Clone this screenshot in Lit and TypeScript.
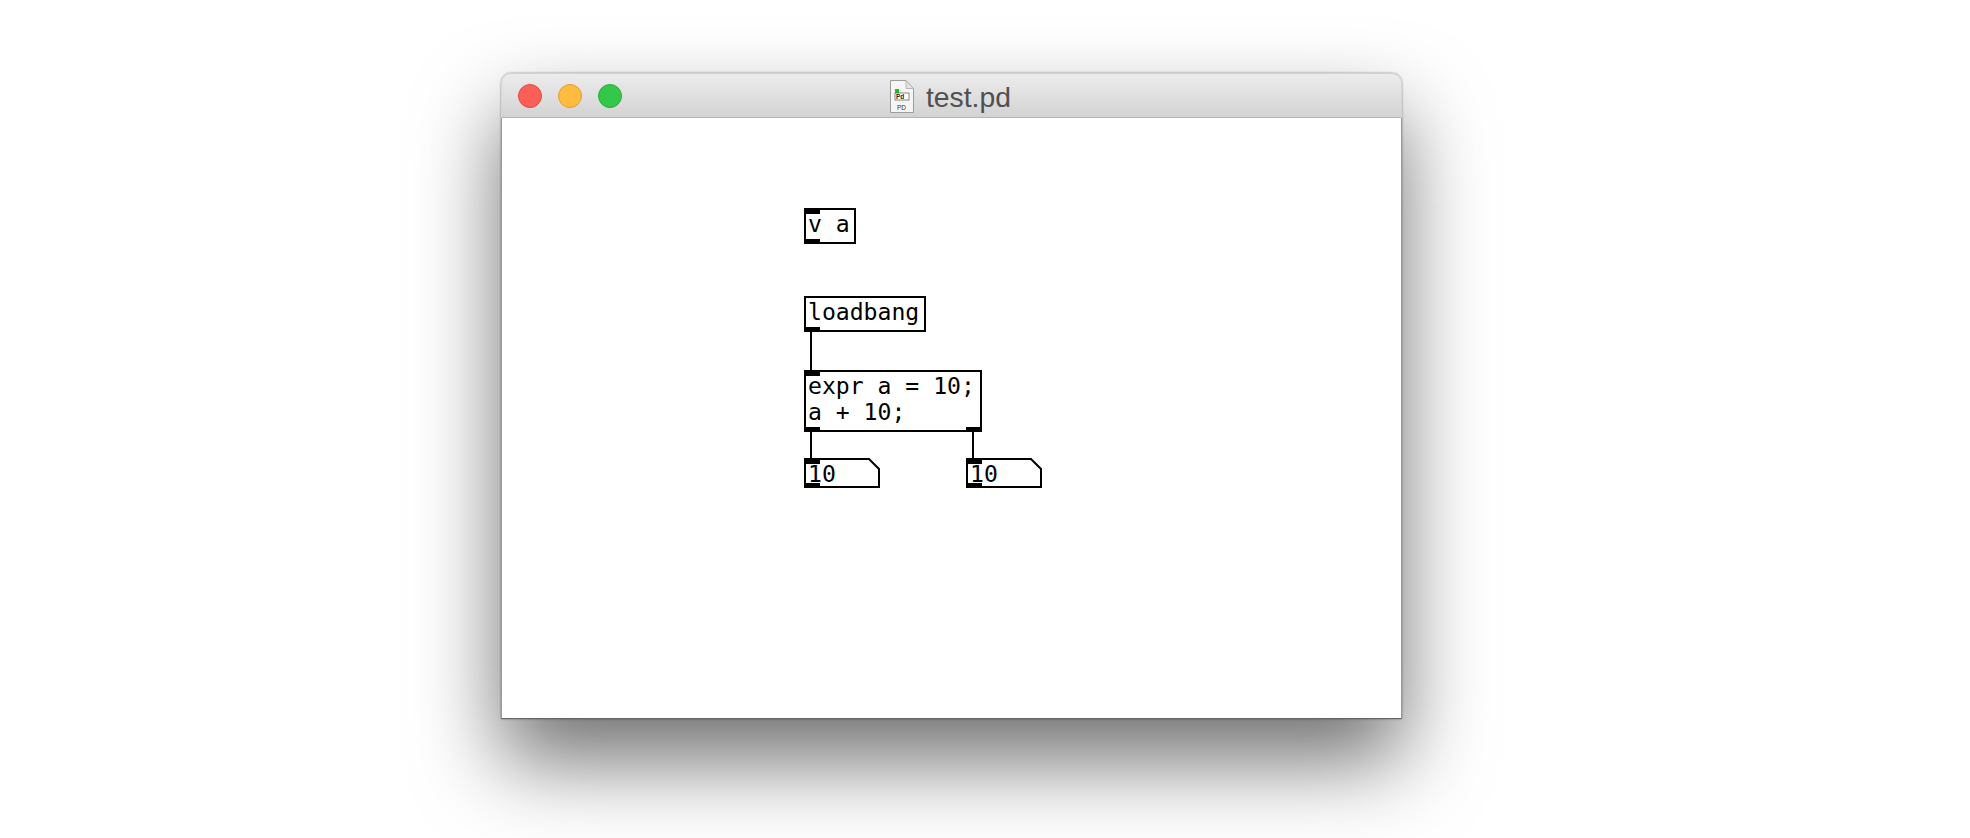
import { LitElement, html, css, svg } from "lit";
import { customElement } from "lit/decorators.js";

type Box = { cls: string; x: number; y: number; w: number; h: number; lines: string[]; outlets: number[]; inlets: number[] };

const boxes: Box[] = [
  { cls: "obj", x: 0, y: 0, w: 52, h: 36, lines: ["v a"], inlets: [0], outlets: [0] },
  { cls: "obj", x: 0, y: 88, w: 122, h: 36, lines: ["loadbang"], inlets: [], outlets: [0] },
  { cls: "obj", x: 0, y: 162, w: 178, h: 62, lines: ["expr a = 10;", "a + 10;"], inlets: [0], outlets: [0, 162] },
  { cls: "num", x: 0, y: 250, w: 76, h: 30, lines: ["10"], inlets: [0], outlets: [0] },
  { cls: "num", x: 162, y: 250, w: 76, h: 30, lines: ["10"], inlets: [0], outlets: [0] },
];

const wires = [
  { x: 6, y: 124, h: 38 },
  { x: 6, y: 224, h: 26 },
  { x: 168, y: 224, h: 26 },
];

@customElement("app-root")
export class AppRoot extends LitElement {
  static styles = css`
    :host { display: block; height: 838px; overflow: hidden; background: #fff; }
    .stage { padding: 73px 0 0 501px; }
    .window {
      width: 901px; height: 646px; display: flex; flex-direction: column; background: #fff;
      border-radius: 10px 10px 0 0;
      box-shadow: 0 42px 84px rgba(0,0,0,.56), 0 0 2px rgba(0,0,0,.5);
    }
    .bar {
      flex: none; display: flex; align-items: center; position: relative;
      background: linear-gradient(#ececec, #d3d3d3);
      border: 1px solid #d6d6d6; border-top-color: #d2d2d2; border-bottom-color: #b5b5b5;
      border-radius: 10px 10px 0 0; height: 43px;
    }
    .lights { display: flex; gap: 16px; padding-left: 16px; }
    .light { width: 22px; height: 22px; border-radius: 50%; border: 1px solid; }
    .red { background: #fc5f57; border-color: #e04a42; }
    .yellow { background: #fdbc40; border-color: #e0a030; }
    .green { background: #34c84a; border-color: #28ab38; }
    .title {
      position: absolute; left: 388px; top: 6px; display: flex; align-items: center; gap: 12px;
      font: 28.3px/32px "Liberation Sans", Arial, sans-serif; color: #505050;
    }
    .title svg { display: block; }
    .canvas { flex: 1; position: relative; background: #fff; border-left: 1px solid #9a9a9a; border-right: 1px solid #9a9a9a; border-bottom: 1px solid #666; }
    .patch { position: absolute; left: 302px; top: 90px; }
    .node { position: absolute; box-sizing: border-box; font: 23.1px/26px "DejaVu Sans Mono", monospace; color: #000; padding: 1px 0 0 2px; }
    .obj { border: 2px solid #000; }
    .num { padding: 3px 0 0 4px; }
    .num svg { position: absolute; left: 0; top: 0; }
    .line { display: block; position: relative; white-space: pre; }
    .port { position: absolute; width: 16px; height: 6px; background: #000; }
    .in { top: 0; }
    .out { bottom: 0; height: 5px; }
    .obj .in { top: -2px; }
    .obj .out { bottom: -2px; }
    .wire { position: absolute; width: 2px; background: #000; }
  `;

  private renderNotch(b: Box) {
    return html`<svg width=${b.w} height=${b.h} viewBox="0 0 ${b.w} ${b.h}" fill="none">
      ${svg`<path d="M1 1H${b.w - 11}L${b.w - 1} 11V${b.h - 1}H1Z" stroke="#000" stroke-width="2"/>`}
    </svg>`;
  }

  render() {
    return html`
      <div class="stage">
        <div class="window">
          <div class="bar">
            <div class="lights">
              <div class="light red"></div>
              <div class="light yellow"></div>
              <div class="light green"></div>
            </div>
            <div class="title">
              <svg width="24" height="33" viewBox="0 0 24 33">
                <path d="M.5 .5H16L23.5 8.5V32.5H.5Z" fill="#f6f6f6" stroke="#9c9c9c"/>
                <path d="M16 .5V8.5H23.5Z" fill="#e2e2e2" stroke="#b8b8b8"/>
                <rect x="5" y="9" width="4" height="4" fill="#12c81e"/>
                <rect x="5" y="13" width="14" height="7" fill="#fff" stroke="#555" stroke-width=".7"/>
                <text x="6" y="19" font-family="Liberation Sans" font-size="6.5" font-weight="700" fill="#222">Pd</text>
                <text x="7" y="29.5" font-family="Liberation Sans" font-size="6.5" fill="#333">PD</text>
              </svg>
              <span>test.pd</span>
            </div>
          </div>
          <div class="canvas">
            <div class="patch">
              ${wires.map((w) => html`<div class="wire" style="left:${w.x}px;top:${w.y}px;height:${w.h}px"></div>`)}
              ${boxes.map(
                (b) => html`<div class="node ${b.cls}" style="left:${b.x}px;top:${b.y}px;width:${b.w}px;height:${b.h}px">
                  ${b.cls === "num" ? this.renderNotch(b) : ""}
                  ${b.lines.map((l) => html`<span class="line">${l}</span>`)}
                  ${b.inlets.map((p) => html`<div class="port in" style="left:${b.cls === "obj" ? p - 2 : p}px"></div>`)}
                  ${b.outlets.map((p) => html`<div class="port out" style="left:${b.cls === "obj" ? p - 2 : p}px"></div>`)}
                </div>`
              )}
            </div>
          </div>
        </div>
      </div>
    `;
  }
}
